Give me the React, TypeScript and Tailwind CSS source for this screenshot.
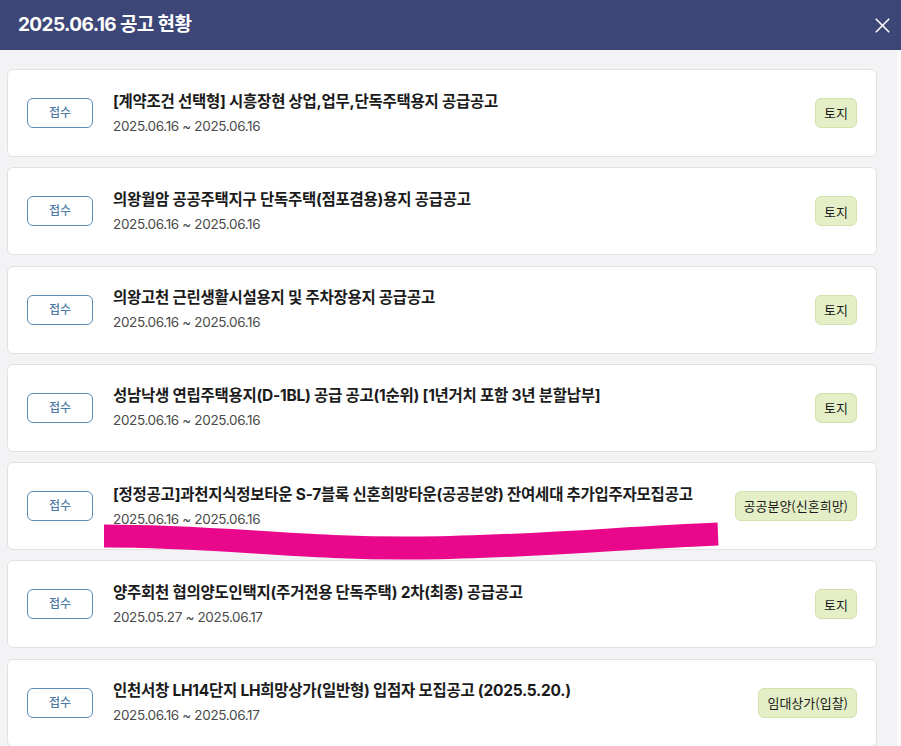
import React from 'react';
import { X } from 'lucide-react';

type Notice = {
  title: string;
  period: string;
  tag: string;
};

const notices: Notice[] = [
  { title: '[계약조건 선택형] 시흥장현 상업,업무,단독주택용지 공급공고', period: '2025.06.16 ~ 2025.06.16', tag: '토지' },
  { title: '의왕월암 공공주택지구 단독주택(점포겸용)용지 공급공고', period: '2025.06.16 ~ 2025.06.16', tag: '토지' },
  { title: '의왕고천 근린생활시설용지 및 주차장용지 공급공고', period: '2025.06.16 ~ 2025.06.16', tag: '토지' },
  { title: '성남낙생 연립주택용지(D-1BL) 공급 공고(1순위) [1년거치 포함 3년 분할납부]', period: '2025.06.16 ~ 2025.06.16', tag: '토지' },
  { title: '[정정공고]과천지식정보타운 S-7블록 신혼희망타운(공공분양) 잔여세대 추가입주자모집공고', period: '2025.06.16 ~ 2025.06.16', tag: '공공분양(신혼희망)' },
  { title: '양주회천 협의양도인택지(주거전용 단독주택) 2차(최종) 공급공고', period: '2025.05.27 ~ 2025.06.17', tag: '토지' },
  { title: '인천서창 LH14단지 LH희망상가(일반형) 입점자 모집공고 (2025.5.20.)', period: '2025.06.16 ~ 2025.06.17', tag: '임대상가(입찰)' },
];

const NoticeCard = ({ notice }: { notice: Notice }) => (
  <div className="flex h-[88px] shrink-0 items-center rounded-md border border-[#e1e1e1] bg-white pl-[19px] pr-[19px]">
    <button className="flex h-[30px] w-[66px] shrink-0 items-center justify-center rounded-md border border-[#5d8cb6] text-[12px] font-medium text-[#4f7ca6]">
      접수
    </button>
    <div className="ml-[20px] flex min-w-0 flex-1 flex-col">
      <div className="truncate text-[15.5px] font-bold leading-[20px] tracking-[-0.25px] text-[#1b1b1b]">
        {notice.title}
      </div>
      <div className="mt-[5px] text-[13.5px] leading-[18px] tracking-[-0.35px] text-[#4a4a4a]">
        {notice.period}
      </div>
    </div>
    <span className="ml-4 flex h-[30px] shrink-0 items-center rounded-md border border-[#d3e2ab] bg-[#e4efc7] px-[8px] text-[13px] text-[#1a1a1a] [font-family:'Noto_Sans_CJK_KR','Noto_Sans',sans-serif]">
      {notice.tag}
    </span>
  </div>
);

export default function App() {
  return (
    <div className="flex h-[746px] w-[901px] flex-col overflow-hidden bg-[#f3f3f5] [font-family:Inter,'Noto_Sans_CJK_KR',sans-serif]">
      <header className="flex h-[50px] shrink-0 items-center justify-between bg-[#3c4677] pl-[18px] pr-[6px]">
        <h1 className="text-[19px] font-bold tracking-[-0.6px] text-white">2025.06.16 공고 현황</h1>
        <X className="h-[25px] w-[25px] text-white" strokeWidth={1.6} />
      </header>
      <div className="relative flex flex-1 overflow-hidden">
        <div className="flex flex-1 flex-col gap-[10.3px] pl-[7px] pr-[20px] pt-[19px]">
          {notices.map((n, i) => (
            <NoticeCard key={i} notice={n} />
          ))}
        </div>
        <div className="w-[4px] shrink-0 bg-[#fafafa]" />
        {/* redaction marker stroke */}
        <svg className="pointer-events-none absolute left-0 top-0" width="901" height="696">
          <path
            d="M104 486 C 220 486, 300 499, 420 498 C 530 497, 620 488, 718 484"
            fill="none"
            stroke="#e9078b"
            strokeWidth="23"
            strokeLinecap="butt"
          />
        </svg>
      </div>
    </div>
  );
}
